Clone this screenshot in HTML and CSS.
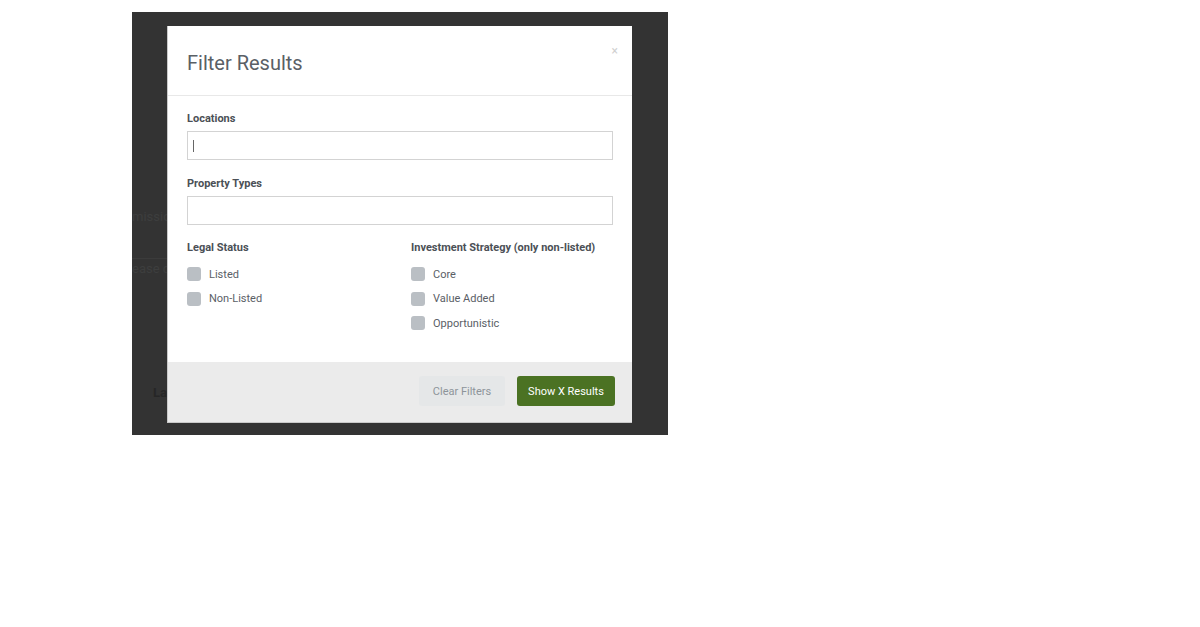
FILE: index.html
```html
<!DOCTYPE html>
<html lang="en">
<head>
  <meta charset="UTF-8">
  <meta name="viewport" content="width=device-width, initial-scale=1.0">
  <title>Filter Results</title>
  <link rel="stylesheet" href="styles.css">
</head>
<body>

  <div class="backdrop">
    <!-- page behind the overlay -->
    <div class="page-behind">
      <div class="behind-line">mission</div>
      <div class="behind-rule"></div>
      <div class="behind-line">ease do</div>
      <div class="behind-label">La</div>
    </div>

    <div class="modal">
      <div class="modal-header">
        <h2>Filter Results</h2>
        <span class="close">&times;</span>
      </div>

      <div class="modal-body">
        <label class="field-label">Locations</label>
        <div class="text-input"><span class="caret"></span></div>

        <label class="field-label">Property Types</label>
        <div class="text-input"></div>

        <div class="columns">
          <div class="group">
            <div class="field-label">Legal Status</div>
            <div class="check"><span class="box"></span>Listed</div>
            <div class="check"><span class="box"></span>Non-Listed</div>
          </div>
          <div class="group">
            <div class="field-label">Investment Strategy (only non-listed)</div>
            <div class="check"><span class="box"></span>Core</div>
            <div class="check"><span class="box"></span>Value Added</div>
            <div class="check"><span class="box"></span>Opportunistic</div>
          </div>
        </div>
      </div>

      <div class="modal-footer">
        <button class="btn-clear">Clear Filters</button>
        <button class="btn-show">Show X Results</button>
      </div>
    </div>
  </div>

</body>
</html>
```

FILE: styles.css
```css
body {
  margin: 0;
  background-color: #ffffff;
  font-family: Roboto, "Liberation Sans", sans-serif;
}

.backdrop {
  position: relative;
  margin: 12px 0 0 132px;
  width: 536px;
  height: 423px;
  background-color: #333333;
  overflow: hidden;
}

.page-behind {
  padding-top: 196px;
  color: #3d3e3e;
  font-size: 13px;
}

.behind-line {
  height: 17px;
  line-height: 17px;
}

.behind-rule {
  height: 1px;
  width: 40px;
  background-color: #3b3b3b;
  margin: 33px 0 1px;
}

.behind-label {
  margin: 107px 0 0 21px;
  line-height: 17px;
  font-weight: bold;
  color: #262626;
}

.modal {
  position: absolute;
  top: 14px;
  left: 35px;
  width: 464px;
  height: 396px;
  background-color: #ffffff;
  border-left: 1px solid #c9c9c9;
  border-bottom: 1px solid #c9c9c9;
  display: flex;
  flex-direction: column;
}

.modal-header {
  position: relative;
  height: 65px;
  border-bottom: 1px solid #e8e8e8;
  padding: 4px 19px 0;
  display: flex;
  align-items: center;
}

.modal-header h2 {
  margin: 0;
  font-size: 20px;
  font-weight: normal;
  color: #5a6066;
}

.close {
  position: absolute;
  top: 18px;
  right: 14px;
  font-size: 12px;
  color: #d0d0d0;
}

.modal-body {
  flex: 1;
  padding: 16px 19px 0;
}

.field-label {
  display: block;
  font-size: 11px;
  font-weight: bold;
  color: #4b5056;
  line-height: 14px;
  margin-bottom: 5px;
}

.text-input {
  height: 27px;
  border: 1.5px solid #d3d3d3;
  margin-bottom: 17px;
  display: flex;
  align-items: center;
  padding-left: 5px;
}

.caret {
  width: 1px;
  height: 12px;
  background-color: #666;
}

.columns {
  display: grid;
  grid-template-columns: 224px 1fr;
  margin-top: -1px;
}

.group .field-label {
  margin-bottom: 7px;
}

.check {
  display: flex;
  align-items: center;
  height: 24.5px;
  font-size: 11px;
  color: #5a6066;
}

.box {
  width: 14px;
  height: 14px;
  border-radius: 3px;
  background-color: #babfc4;
  margin-right: 8px;
}

.modal-footer {
  height: 58px;
  padding: 0 17px 2px 0;
  background-color: #ebebeb;
  display: flex;
  justify-content: flex-end;
  align-items: center;
  gap: 12px;
}

.modal-footer button {
  height: 30px;
  border: none;
  border-radius: 3px;
  font-family: inherit;
  font-size: 11px;
  cursor: pointer;
}

.btn-clear {
  width: 86px;
  background-color: #e5e7e8;
  color: #8d949a;
}

.btn-show {
  width: 98px;
  background-color: #4b7223;
  color: #ffffff;
}
```
